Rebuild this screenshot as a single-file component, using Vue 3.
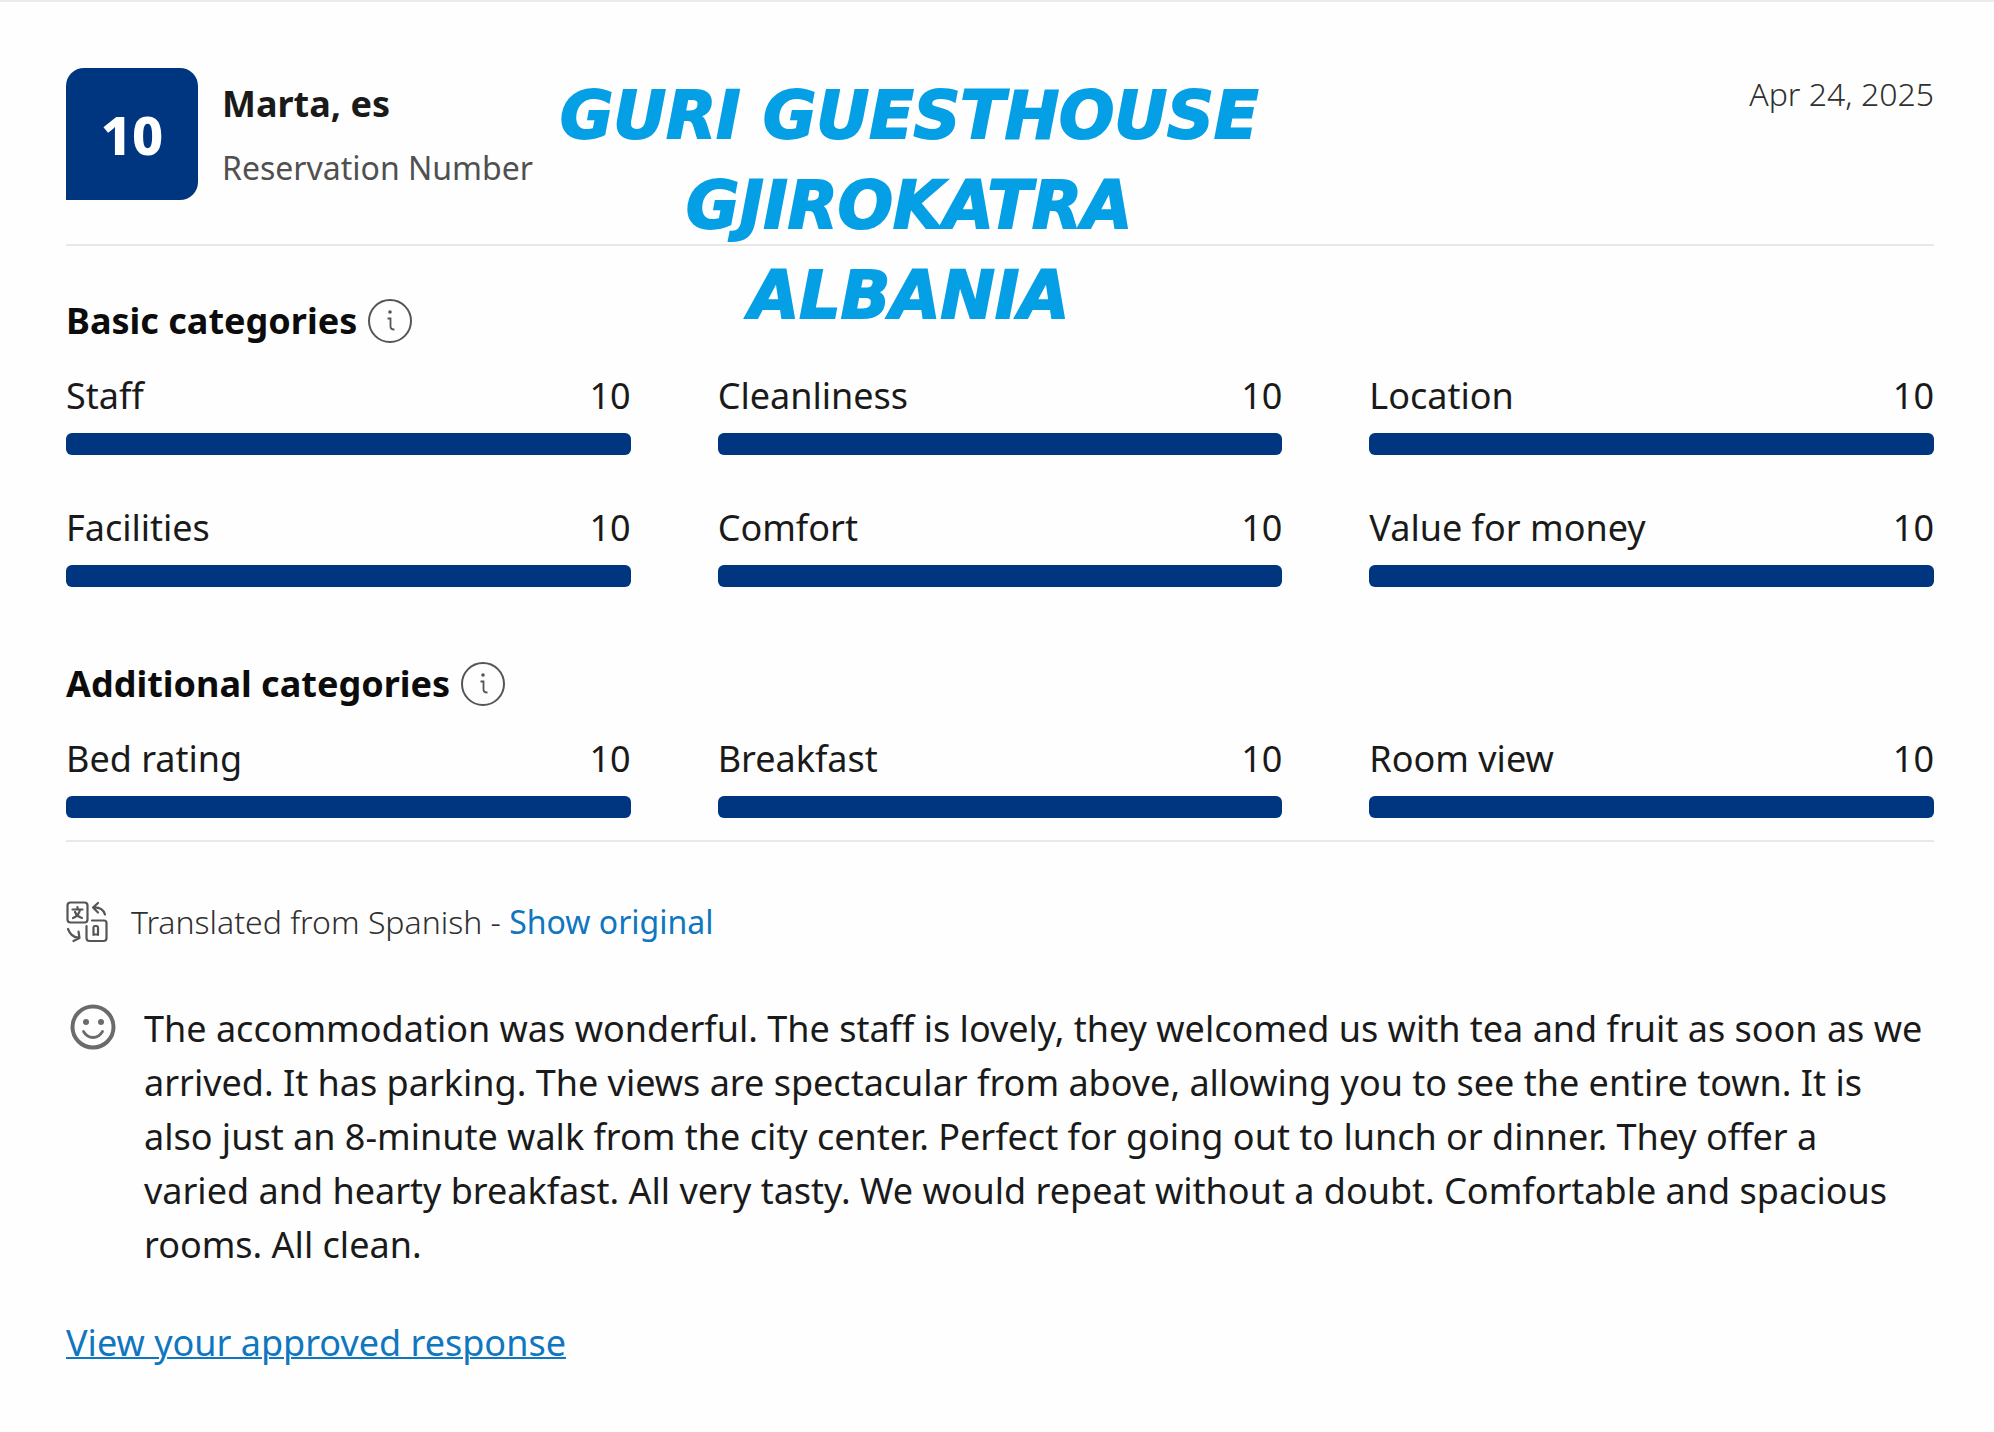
<script setup>
import { ref } from "vue";

const basicCategories = ref([
  { name: "Staff", score: 10 },
  { name: "Cleanliness", score: 10 },
  { name: "Location", score: 10 },
  { name: "Facilities", score: 10 },
  { name: "Comfort", score: 10 },
  { name: "Value for money", score: 10 },
]);

const additionalCategories = ref([
  { name: "Bed rating", score: 10 },
  { name: "Breakfast", score: 10 },
  { name: "Room view", score: 10 },
]);

const groups = [
  { title: "Basic categories", items: basicCategories },
  { title: "Additional categories", items: additionalCategories },
];
</script>

<template>
  <main class="review">
    <header class="header">
      <div class="score">10</div>
      <div class="guest">
        <h2 class="name">Marta, es</h2>
        <p class="reservation">Reservation Number</p>
      </div>
      <time class="date" datetime="2025-04-24">Apr 24, 2025</time>
    </header>

    <h1 class="property">
      <span>GURI GUESTHOUSE</span>
      <span>GJIROKATRA</span>
      <span>ALBANIA</span>
    </h1>

    <div class="ratings">
      <section v-for="group in groups" :key="group.title" class="group">
        <h3 class="group-title">
          {{ group.title }}
          <button class="info" type="button" :aria-label="'About ' + group.title">
            <svg viewBox="0 0 44 44" fill="none" stroke="#555">
              <circle cx="22" cy="22" r="21" stroke-width="2" />
              <circle cx="22" cy="13" r="1.8" fill="#555" stroke="none" />
              <path d="M19.500 19.500h3v8q0 3 4 3" stroke-width="1.8" />
            </svg>
          </button>
        </h3>
        <div class="grid">
          <div v-for="item in group.items.value" :key="item.name">
            <div class="label">
              <span>{{ item.name }}</span>
              <span>{{ item.score }}</span>
            </div>
            <div class="track">
              <div class="fill" :style="{ width: item.score * 10 + '%' }"></div>
            </div>
          </div>
        </div>
      </section>
    </div>

    <div class="translated">
      <svg class="translate-icon" viewBox="0 0 42 42" fill="none" stroke="#555" stroke-width="2.2" stroke-linecap="round" stroke-linejoin="round">
        <rect x="1.500" y="1.500" width="20" height="20" rx="3" />
        <path d="M6.500 8.500h10M11.500 6v2.500M14 9q-1.500 6-7 8M9 11q2 4.500 7 6" />
        <path d="M26 19.500h12q2.500 0 2.500 2.500v15q0 3-3 3h-14q-3 0-3-3v-12" />
        <path d="M27.500 34v-7q0-2 1.500-2h1.500q1.500 0 1.500 2v7M27.500 33.500h4.500" />
        <path d="M32 2l-5 4.500 5 5M27.500 6.500q9-.5 11.500 7" />
        <path d="M2 28q3 8 10 8.500M12.500 30.500l1 6.500-6 3" />
      </svg>
      <span>Translated from Spanish - <a href="#">Show original</a></span>
    </div>

    <div class="comment">
      <svg class="smile" viewBox="0 0 46 46" fill="none" stroke="#6b6b6b">
        <circle cx="23" cy="23" r="20.500" stroke-width="4" />
        <circle cx="16" cy="18" r="3" fill="#6b6b6b" stroke="none" />
        <circle cx="31" cy="18" r="3" fill="#6b6b6b" stroke="none" />
        <path d="M13.500 27.500q3.500 6 9.500 6t9.500-6" stroke-width="2.800" stroke-linecap="round" />
      </svg>
      <p>
        The accommodation was wonderful. The staff is lovely, they welcomed us with tea and fruit as soon as we
        arrived. It has parking. The views are spectacular from above, allowing you to see the entire town. It is
        also just an 8-minute walk from the city center. Perfect for going out to lunch or dinner. They offer a
        varied and hearty breakfast. All very tasty. We would repeat without a doubt. Comfortable and spacious
        rooms. All clean.
      </p>
    </div>

    <a class="response" href="#">View your approved response</a>
  </main>
</template>

<style>
body {
  margin: 0;
  background: #fefefe;
}
</style>

<style scoped>
.review {
  position: relative;
  padding: 66px 60px 64px 66px;
  border-top: 2px solid #ececec;
  font-family: "Noto Sans", "Open Sans", sans-serif;
  font-size: 36px;
  line-height: 48px;
  color: #1a1a1a;
}

h1,
h2,
h3,
p {
  margin: 0;
}

a {
  color: #0f76c0;
  font-weight: 400;
  text-decoration: none;
}

/* Header */
.header {
  display: flex;
  gap: 24px;
  padding-bottom: 44px;
  border-bottom: 2px solid #e8e8e8;
}

.score {
  display: flex;
  align-items: center;
  justify-content: center;
  width: 132px;
  height: 132px;
  border-radius: 18px 18px 18px 0;
  background: #003580;
  color: white;
  font-size: 54px;
  font-weight: 800;
}

.guest {
  padding-top: 12px;
}

.name {
  font-size: 36px;
  font-weight: 700;
  line-height: 48px;
}

.reservation {
  margin-top: 16px;
  font-size: 32px;
  color: #505050;
}

.date {
  margin-top: 2px;
  margin-left: auto;
  font-size: 32px;
  font-weight: 300;
  color: #303030;
}

/* Property name lies over the header and its divider */
.property {
  position: absolute;
  top: 69px;
  left: 560px;
  font-family: "DejaVu Sans", sans-serif;
  font-size: 65px;
  font-style: italic;
  font-weight: 700;
  line-height: 90px;
  text-align: center;
  color: #059fe5;
  -webkit-text-stroke: 2px #059fe5;
}

.property span {
  display: block;
}

/* Ratings */
.ratings {
  display: grid;
  gap: 75px;
  padding: 53px 0 22px;
  border-bottom: 2px solid #e8e8e8;
}

.group-title {
  display: flex;
  align-items: center;
  gap: 11px;
  margin-bottom: 29px;
  font-size: 36px;
  font-weight: 700;
  line-height: 44px;
  color: #0c0c0c;
}

.info {
  width: 44px;
  height: 44px;
  padding: 0;
  border: none;
  background: none;
  cursor: pointer;
}

.info svg {
  display: block;
}

.grid {
  display: grid;
  grid-template-columns: repeat(3, 1fr);
  gap: 49px 87px;
}

.label {
  display: flex;
  justify-content: space-between;
}

.track {
  height: 22px;
  margin-top: 13px;
  border-radius: 6px;
  background: #e7e7e7;
}

.fill {
  height: 100%;
  border-radius: 6px;
  background: #003580;
}

/* Translation note */
.translated {
  display: flex;
  align-items: center;
  gap: 23px;
  margin-top: 56px;
  font-size: 32px;
  font-weight: 300;
  color: #303030;
}

.translate-icon {
  width: 42px;
  height: 42px;
}

/* Comment */
.comment {
  display: flex;
  gap: 28px;
  margin-top: 56px;
  padding: 0 8px 0 4px;
  line-height: 54px;
}

.smile {
  flex: none;
  width: 46px;
  height: 46px;
  margin-top: 2px;
}

.response {
  display: inline-block;
  margin-top: 47px;
  text-decoration: underline;
  text-decoration-thickness: 2px;
}
</style>
